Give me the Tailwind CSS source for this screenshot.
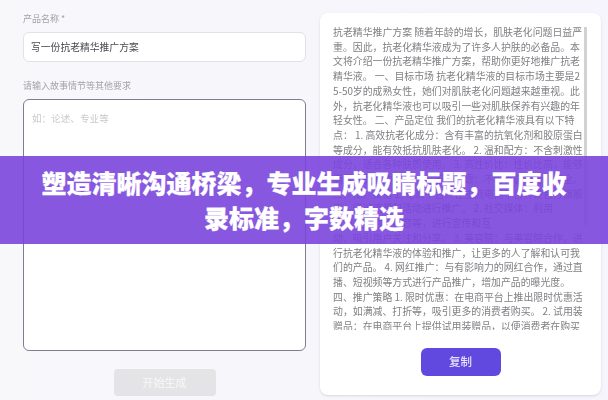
<!DOCTYPE html>
<html lang="zh-CN">
<head>
    <meta charset="UTF-8">
    <meta name="viewport" content="width=device-width, initial-scale=1.0">
    <title>塑造清晰沟通桥梁</title>
    <script src="https://cdn.jsdelivr.net/npm/@tailwindcss/browser@4"></script>
</head>
<body class="bg-[#f8f7fc]">
    <div class="relative w-[608px] h-[400px] overflow-hidden font-['Noto_Sans_CJK_SC','Liberation_Sans',sans-serif]">
        <!-- page under the banner -->
        <div class="flex w-full h-full blur-[0.5px] bg-gradient-to-r from-[#f8f8fb] to-[#f6f4fc]">
            <div class="flex flex-col w-[320px] pl-[23px] pr-[14px] pt-[12px]">
                <label class="h-[20px] text-[9px] leading-[13px] text-[#a3a3a8]">产品名称 *</label>
                <div class="flex items-center h-[30px] px-[7px] bg-white border border-[#e2e1e6] rounded-md text-[9.8px] text-[#4a4a50]">写一份抗老精华推广方案</div>
                <label class="mt-[17px] h-[20px] text-[9px] leading-[13px] text-[#a3a3a8]">请输入故事情节等其他要求</label>
                <div class="h-[252px] px-[8px] py-[11px] bg-white border border-[#7f7d92] rounded-md text-[9.6px] leading-[14px] text-[#c9c9cc]">如：论述、专业等</div>
                <div class="mt-[18px] self-center flex items-center justify-center w-[102px] h-[27px] bg-[#e4e4e6] rounded-sm text-[11px] text-[#f8f8f8]">开始生成</div>
            </div>
            <div class="flex flex-col items-center w-[281px] h-[382px] mt-[13px] bg-white rounded-lg shadow-sm">
                <div class="relative w-full h-[317px] pl-[13px] pt-[12px] overflow-hidden">
                    <p class="text-[9.9px] leading-[14.7px] text-[#808085] whitespace-nowrap">
                        抗老精华推广方案 随着年龄的增长，肌肤老化问题日益严<br>
                        重。因此，抗老化精华液成为了许多人护肤的必备品。本<br>
                        文将介绍一份抗老精华推广方案，帮助你更好地推广抗老<br>
                        精华液。 一、目标市场 抗老化精华液的目标市场主要是2<br>
                        5-50岁的成熟女性，她们对肌肤老化问题越来越重视。此<br>
                        外，抗老化精华液也可以吸引一些对肌肤保养有兴趣的年<br>
                        轻女性。 二、产品定位 我们的抗老化精华液具有以下特<br>
                        点： 1. 高效抗老化成分：含有丰富的抗氧化剂和胶原蛋白<br>
                        等成分，能有效抵抗肌肤老化。 2. 温和配方：不含刺激性<br>
                        成分，适合各种肤质使用。 3. 高性价比：性价比高，能够<br>
                        满足消费者的需求。 4. 安全可靠：不含有害成分，安全。<br>
                        三、推广渠道 1. 电商平台：在主流电商平台开设官方旗舰<br>
                        店，通过流量和活动进行推广。 2. 社交媒体：利用<br>
                        微博、微信、抖音等，进行宣传和互<br>
                        动，吸引用户关注和分享。 3. 美容院：与美容院合作，进<br>
                        行抗老化精华液的体验和推广，让更多的人了解和认可我<br>
                        们的产品。 4. 网红推广：与有影响力的网红合作，通过直<br>
                        播、短视频等方式进行产品推广，增加产品的曝光度。<br>
                        四、推广策略 1. 限时优惠：在电商平台上推出限时优惠活<br>
                        动，如满减、打折等，吸引更多的消费者购买。 2. 试用装<br>
                        赠品：在电商平台上提供试用装赠品，以便消费者在购买
                    </p>
                    <div class="absolute top-[14px] right-[14px] w-[3px] h-[198px] bg-[#d2d2d5]"></div>
                </div>
                <div class="mt-[18px] flex items-center justify-center w-[80px] h-[28px] bg-[#6149e0] rounded-md text-[11.5px] font-medium text-[#e6e2fb]">复制</div>
            </div>
        </div>
        <!-- banner -->
        <div class="absolute left-0 top-[156px] flex items-center justify-center w-full h-[88px] bg-[#7b45dd]/90">
            <h1 class="w-[530px] text-center text-[25px] leading-[35px] font-black text-white [-webkit-text-stroke:0.25px_white]">塑造清晰沟通桥梁，专业生成吸睛标题，百度收录标准，字数精选</h1>
        </div>
    </div>
</body>
</html>
